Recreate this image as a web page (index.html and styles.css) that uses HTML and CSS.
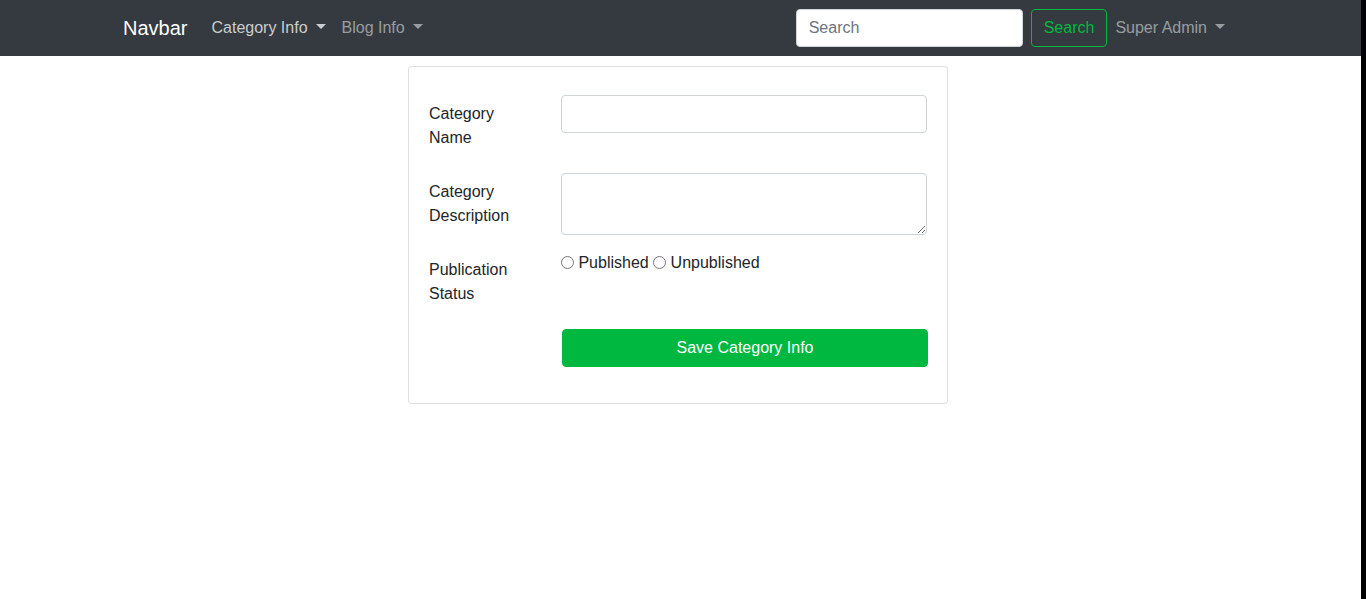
FILE: index.html
```html
<!DOCTYPE html>
<html lang="en">
<head>
<meta charset="utf-8">
<title>Category Info</title>
<link rel="stylesheet" href="styles.css">
</head>
<body>
<div class="app">
  <div class="viewport">
    <nav class="navbar">
      <div class="container nav-inner">
        <a class="brand" href="#">Navbar</a>
        <ul class="nav-list">
          <li><a class="nav-link active" href="#">Category Info<span class="caret"></span></a></li>
          <li><a class="nav-link" href="#">Blog Info<span class="caret"></span></a></li>
        </ul>
        <form class="search-form">
          <input class="search-input" type="search" placeholder="Search">
          <button class="btn-outline" type="button">Search</button>
        </form>
        <a class="nav-link" href="#">Super Admin<span class="caret"></span></a>
      </div>
    </nav>
    <div class="content">
      <main class="container">
        <div class="card-wrap">
          <div class="card">
            <form class="card-body">
              <div class="form-row">
                <label class="form-label">Category Name</label>
                <div class="form-field"><input class="form-control" type="text"></div>
              </div>
              <div class="form-row">
                <label class="form-label">Category Description</label>
                <div class="form-field"><textarea class="form-control textarea" rows="2"></textarea></div>
              </div>
              <div class="form-row">
                <label class="form-label">Publication Status</label>
                <div class="form-field radios">
                  <label class="radio"><input type="radio" name="status"> Published</label>
                  <label class="radio"><input type="radio" name="status"> Unpublished</label>
                </div>
              </div>
              <div class="form-row">
                <div class="form-label empty"></div>
                <div class="form-field"><button class="btn-save" type="button">Save Category Info</button></div>
              </div>
            </form>
          </div>
        </div>
      </main>
    </div>
  </div>
  <div class="edge"></div>
</div>
</body>
</html>
```
FILE: styles.css
```css
* { box-sizing: border-box; }
html, body { margin: 0; padding: 0; height: 100%; }
body {
  font-family: "Liberation Sans", Arial, sans-serif;
  font-size: 16px;
  line-height: 1.5;
  color: #212529;
  background: #fff;
}
.app { display: flex; min-height: 100%; }
.viewport { flex: 1; min-width: 0; }
.edge { width: 5px; background: #000; flex: none; }
.container { width: 1140px; margin: 0 auto; padding: 0 15px; }
.content { padding-right: 5px; }

.navbar { background: #343a40; height: 56px; padding-right: 5px; }
.nav-inner { display: flex; align-items: center; height: 56px; }
.brand {
  color: #fff; font-size: 20px; line-height: 30px;
  text-decoration: none; margin-right: 16px;
  padding: 5px 0;
}
.nav-list { display: flex; list-style: none; margin: 0; padding: 0; flex: 1; }
.nav-link {
  display: block; padding: 8px; text-decoration: none;
  color: rgba(255,255,255,.5); line-height: 24px;
}
.nav-link.active { color: rgba(255,255,255,.75); }
.caret {
  display: inline-block; margin-left: 8px; vertical-align: 4px;
  border-top: 5px solid currentColor;
  border-left: 5px solid transparent;
  border-right: 5px solid transparent;
}
.search-form { display: flex; align-items: center; }
.search-input {
  width: 227px; height: 38px; padding: 6px 12px;
  font: inherit; font-size: 16px; color: #495057;
  border: 1px solid #ced4da; border-radius: 4px; background: #fff;
  margin-right: 8px; outline: none;
}
.search-input::placeholder { color: #6c757d; }
.btn-outline {
  height: 38px; padding: 6px 12px; font: inherit; font-size: 16px;
  color: #00b83f; background: transparent;
  border: 1px solid #00b83f; border-radius: 4px;
}

.card-wrap { width: 540px; margin: 10px auto 0; }
.card { border: 1px solid rgba(0,0,0,.125); border-radius: 4px; background: #fff; }
.card-body { padding: 28px 20px 20px; }
.form-row { display: flex; margin-bottom: 16px; }
.form-label { width: 132px; flex: none; padding: 7px 30px 7px 0; line-height: 24px; }
.form-field { flex: 1; min-width: 0; }
.form-control {
  display: block; width: 100%; height: 38px; padding: 6px 12px;
  font: inherit; font-size: 16px; color: #495057;
  border: 1px solid #ced4da; border-radius: 4px; background: #fff;
}
.textarea { height: 62px; resize: vertical; }
.radios { line-height: 24px; }
.radio input { margin: 0; vertical-align: -1px; width: 13px; height: 13px; }
.btn-save {
  display: block; width: 366px; margin-left: 1px; height: 38px;
  font: inherit; font-size: 16px; color: #fff;
  background: #00b83f; border: 1px solid #00b83f; border-radius: 4px;
}
```
